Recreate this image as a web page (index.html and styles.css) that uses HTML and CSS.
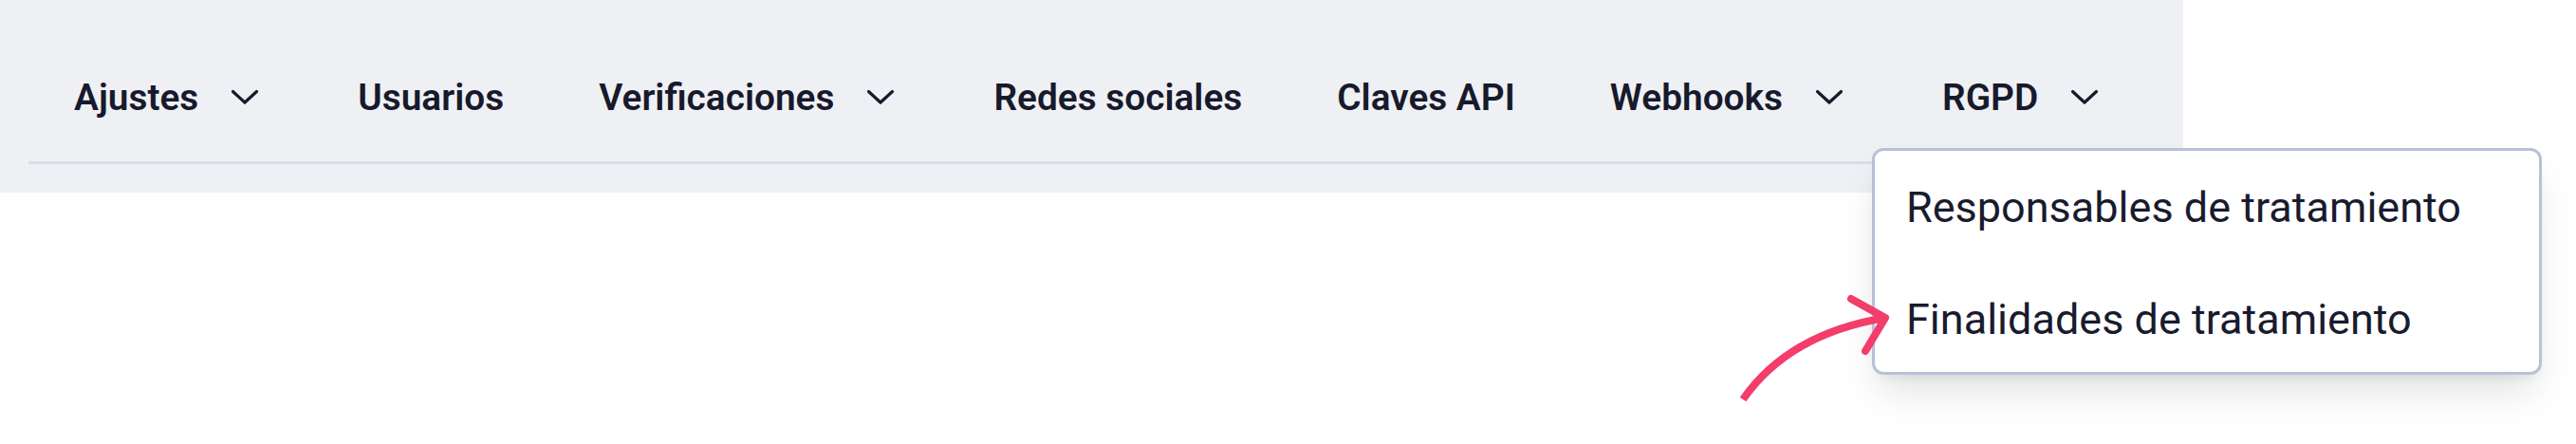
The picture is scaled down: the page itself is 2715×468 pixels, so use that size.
FILE: index.html
```html
<!DOCTYPE html>
<html lang="es">
<head>
<meta charset="utf-8">
<title>Ajustes</title>
<link rel="stylesheet" href="styles.css">
</head>
<body>
<div class="page">
  <header class="topbar">
    <nav class="tabs">
      <a class="tab">Ajustes<svg class="chev" viewBox="0 0 30 17"><path d="M2.5 2.5 L15 14 L27.5 2.5"/></svg></a>
      <a class="tab">Usuarios</a>
      <a class="tab">Verificaciones<svg class="chev" viewBox="0 0 30 17"><path d="M2.5 2.5 L15 14 L27.5 2.5"/></svg></a>
      <a class="tab">Redes sociales</a>
      <a class="tab">Claves API</a>
      <a class="tab">Webhooks<svg class="chev" viewBox="0 0 30 17"><path d="M2.5 2.5 L15 14 L27.5 2.5"/></svg></a>
      <a class="tab">RGPD<svg class="chev" viewBox="0 0 30 17"><path d="M2.5 2.5 L15 14 L27.5 2.5"/></svg></a>
    </nav>
  </header>

  <div class="menu">
    <a class="menu-item">Responsables de tratamiento</a>
    <a class="menu-item">Finalidades de tratamiento</a>
  </div>

  <svg class="pointer" viewBox="1800 290 220 150">
    <path class="pointer-shaft" d="M1837 421 Q1885 352 1987 335"/>
    <path class="pointer-head" d="M1951 315 L1987 335 L1966 370"/>
  </svg>
</div>
</body>
</html>
```
FILE: styles.css
```css
html, body {
  margin: 0;
  padding: 0;
  background: #ffffff;
}

.page {
  position: relative;
  width: 2715px;
  height: 468px;
  overflow: hidden;
  font-family: Roboto, "Noto Sans", sans-serif;
  color: #181a2c;
}

.topbar {
  width: 2301px;
  height: 203px;
  box-sizing: border-box;
  padding: 34px 30px 0;
  background: #eff0f4;
}

.tabs {
  display: flex;
  align-items: center;
  gap: 100px;
  height: 136px;
  padding-left: 48px;
  border-bottom: 3px solid #dcdde7;
}

.tab {
  display: flex;
  align-items: center;
  gap: 34px;
  font-size: 38.8px;
  font-weight: 600;
  white-space: nowrap;
  color: #171a2c;
}

.chev {
  width: 30px;
  height: 17px;
  margin-right: 4px;
  fill: none;
  stroke: #171a2c;
  stroke-width: 3.2;
  stroke-linecap: round;
  stroke-linejoin: round;
}

.menu {
  position: absolute;
  left: 1973px;
  top: 156px;
  width: 706px;
  height: 239px;
  box-sizing: border-box;
  display: flex;
  flex-direction: column;
  background: #ffffff;
  border: 3px solid #b9c1d6;
  border-radius: 12px;
  box-shadow: 0 24px 40px -8px rgba(20, 20, 40, 0.13), 0 8px 14px -8px rgba(20, 20, 40, 0.1);
}

.menu-item {
  display: flex;
  align-items: center;
  height: 118px;
  flex: none;
  padding-left: 33px;
  font-size: 45px;
  font-weight: 400;
  color: #191b2e;
  white-space: nowrap;
}

.pointer {
  position: absolute;
  left: 1800px;
  top: 290px;
  width: 220px;
  height: 150px;
  overflow: visible;
}

.pointer path {
  fill: none;
  stroke: #f33e6b;
  stroke-width: 8;
  stroke-linejoin: round;
}

.pointer-shaft {
  stroke-linecap: butt;
}

.pointer-head {
  stroke-linecap: round;
}
```
